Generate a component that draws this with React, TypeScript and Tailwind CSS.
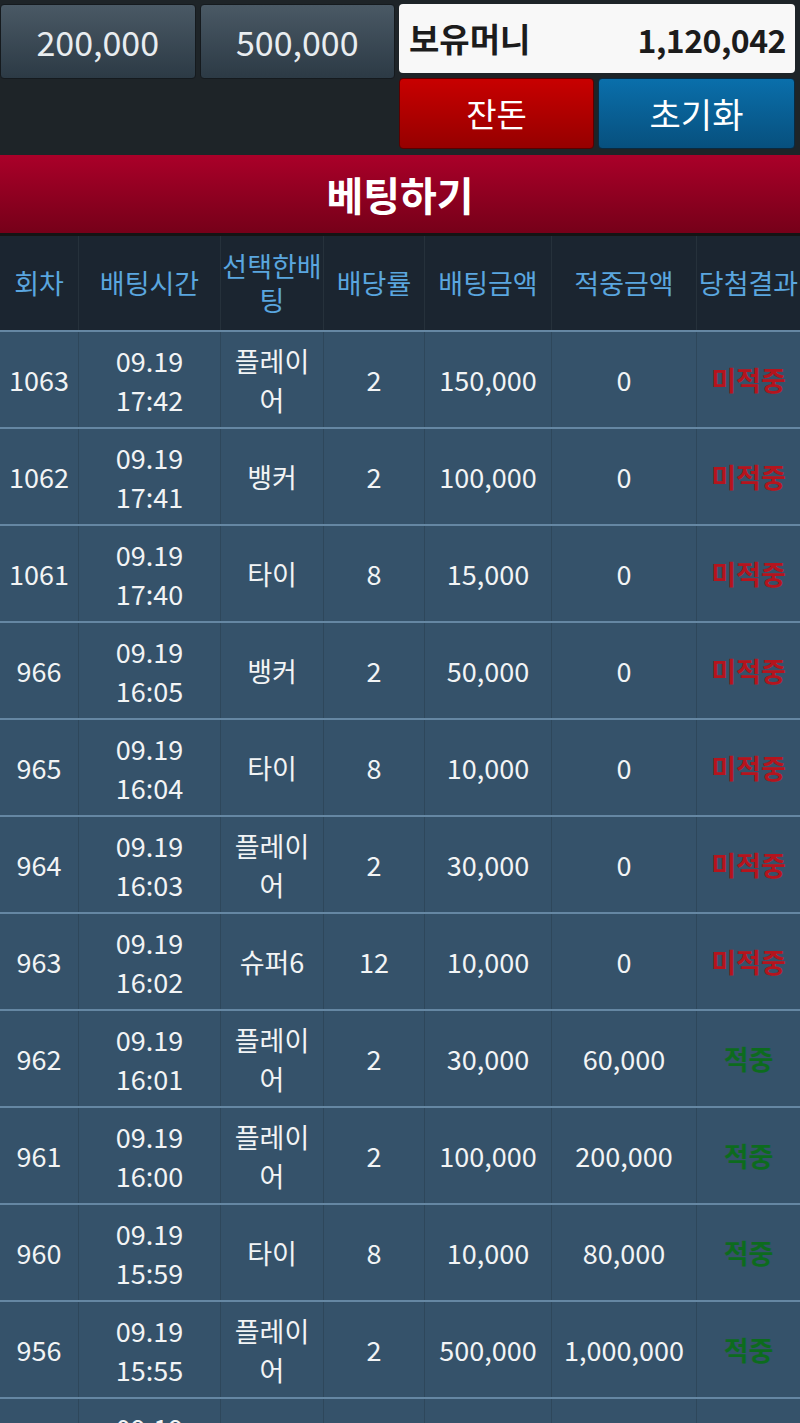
import React from 'react';

type Bet = {
  round: string;
  date: string;
  time: string;
  pick: string;
  odds: string;
  amount: string;
  win: string;
  hit: boolean;
};

const BETS: Bet[] = [
  { round: '1063', date: '09.19', time: '17:42', pick: '플레이어', odds: '2', amount: '150,000', win: '0', hit: false },
  { round: '1062', date: '09.19', time: '17:41', pick: '뱅커', odds: '2', amount: '100,000', win: '0', hit: false },
  { round: '1061', date: '09.19', time: '17:40', pick: '타이', odds: '8', amount: '15,000', win: '0', hit: false },
  { round: '966', date: '09.19', time: '16:05', pick: '뱅커', odds: '2', amount: '50,000', win: '0', hit: false },
  { round: '965', date: '09.19', time: '16:04', pick: '타이', odds: '8', amount: '10,000', win: '0', hit: false },
  { round: '964', date: '09.19', time: '16:03', pick: '플레이어', odds: '2', amount: '30,000', win: '0', hit: false },
  { round: '963', date: '09.19', time: '16:02', pick: '슈퍼6', odds: '12', amount: '10,000', win: '0', hit: false },
  { round: '962', date: '09.19', time: '16:01', pick: '플레이어', odds: '2', amount: '30,000', win: '60,000', hit: true },
  { round: '961', date: '09.19', time: '16:00', pick: '플레이어', odds: '2', amount: '100,000', win: '200,000', hit: true },
  { round: '960', date: '09.19', time: '15:59', pick: '타이', odds: '8', amount: '10,000', win: '80,000', hit: true },
  { round: '956', date: '09.19', time: '15:55', pick: '플레이어', odds: '2', amount: '500,000', win: '1,000,000', hit: true },
  { round: '955', date: '09.19', time: '15:54', pick: '뱅커', odds: '2', amount: '100,000', win: '200,000', hit: true },
];

const COLS = 'grid grid-cols-[79px_142px_103px_101px_127px_145px_103px]';
const HEADERS = ['회차', '배팅시간', '선택한배팅', '배당률', '배팅금액', '적중금액', '당첨결과'];

const font = { fontFamily: '"Noto Sans CJK KR", "Noto Sans", sans-serif' };

function ChipButton({ label }: { label: string }) {
  return (
    <button className="h-[75px] rounded-[4px] bg-gradient-to-b from-[#4a5965] to-[#2c3a45] border border-[#151a1e] text-[34px] text-[#e9edf0] flex items-center justify-center">
      {label}
    </button>
  );
}

function Cell({ children, last }: { children: React.ReactNode; last?: boolean }) {
  return (
    <div
      className={
        'flex items-center justify-center text-center leading-[39px] ' +
        (last ? '' : 'border-r border-[#2e475b]')
      }
    >
      {children}
    </div>
  );
}

export default function App() {
  return (
    <div className="w-[800px] bg-[#1e2428] overflow-hidden" style={font}>
      {/* top controls */}
      <div className="flex gap-[4px] pt-[4px] pr-[5px] h-[155px]">
        <div className="grid grid-cols-2 gap-[4px] w-[395px] self-start">
          <ChipButton label="200,000" />
          <ChipButton label="500,000" />
        </div>
        <div className="flex-1 flex flex-col gap-[5px]">
          <div className="h-[69px] rounded-[4px] bg-[#f8f8f8] flex items-center justify-between pl-[10px] pr-[9px]">
            <span className="text-[33px] font-bold text-[#1c1c1c]">보유머니</span>
            <span className="text-[32px] font-bold text-[#1c1c1c] tracking-[-0.5px]">1,120,042</span>
          </div>
          <div className="grid grid-cols-[195px_1fr] gap-[4px]">
            <button className="h-[71px] rounded-[4px] bg-gradient-to-b from-[#c80000] to-[#960000] border border-[#5a0000] text-[33px] text-white">
              잔돈
            </button>
            <button className="h-[71px] rounded-[4px] bg-gradient-to-b from-[#0a6fab] to-[#07507e] border border-[#0a2a40] text-[34px] text-white">
              초기화
            </button>
          </div>
        </div>
      </div>

      {/* title bar */}
      <div className="h-[81px] bg-gradient-to-b from-[#aa0029] to-[#760019] flex items-center justify-center border-b-[3px] border-[#141414]">
        <span className="text-[40px] font-bold text-white">베팅하기</span>
      </div>

      {/* table header */}
      <div className={COLS + ' h-[94px] bg-[#1b2530] text-[27px] text-[#5aa6df] leading-[34px]'}>
        {HEADERS.map((h, i) => (
          <div
            key={h}
            className={
              'flex items-center justify-center text-center ' +
              (i < HEADERS.length - 1 ? 'border-r border-[#26313b]' : '')
            }
          >
            {h}
          </div>
        ))}
      </div>

      {/* rows */}
      <div>
        {BETS.map((b) => (
          <div
            key={b.round}
            className={COLS + ' h-[97px] bg-[#35526a] border-t-2 border-[#6587a3] text-[27px] text-[#f2f4f5]'}
          >
            <Cell>{b.round}</Cell>
            <Cell>
              <div>
                {b.date}
                <br />
                {b.time}
              </div>
            </Cell>
            <Cell>
              <div className="max-w-[88px] break-all">{b.pick}</div>
            </Cell>
            <Cell>{b.odds}</Cell>
            <Cell>{b.amount}</Cell>
            <Cell>{b.win}</Cell>
            <Cell last>
              <span className={'font-bold text-[27px] ' + (b.hit ? 'text-[#0d6b1e]' : 'text-[#b5141d]')}>
                {b.hit ? '적중' : '미적중'}
              </span>
            </Cell>
          </div>
        ))}
      </div>
    </div>
  );
}
